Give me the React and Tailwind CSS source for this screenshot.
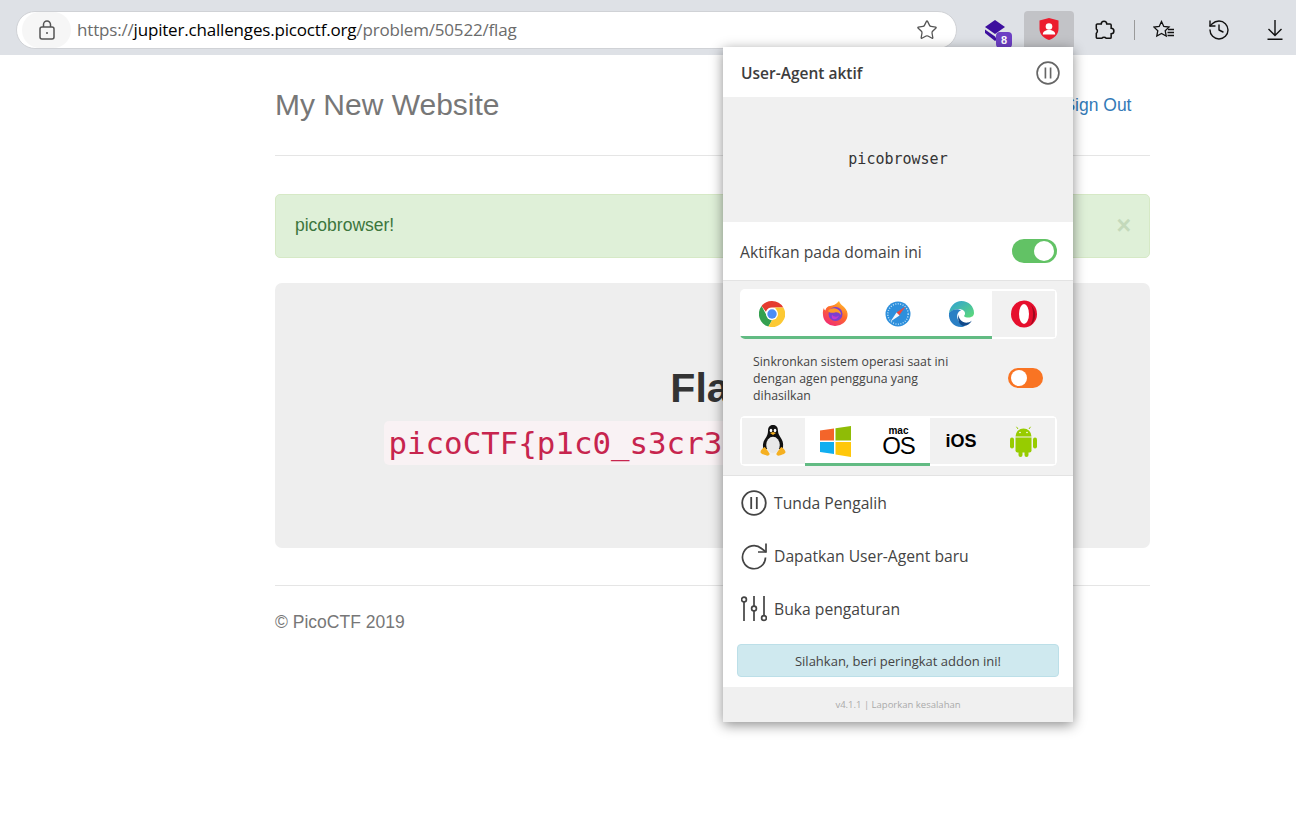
import React from 'react';
import { Star, History } from 'lucide-react';

const PauseIcon = ({ size, color }) => (
    <svg width={size} height={size} viewBox="0 0 26 26" fill="none" stroke={color} strokeWidth="1.8">
        <circle cx="13" cy="13" r="11.8" />
        <path d="M10.2 7v12M15.8 7v12" />
    </svg>
);

const ChromeIcon = () => (
    <svg width="26" height="26" viewBox="0 0 26 26">
        <path d="M13 0a13 13 0 0 1 11.3 6.5H13a6.5 6.5 0 0 0-6.1 4.3L2.6 5A13 13 0 0 1 13 0z" fill="#e53b30" />
        <path d="M2.6 5l5.6 10.5A6.5 6.5 0 0 0 13 19.5l-3.6 6A13 13 0 0 1 2.6 5z" fill="#34a04f" />
        <path d="M24.3 6.5A13 13 0 0 1 9.4 25.5l5.7-9.6a6 6 0 0 0 .6-9.4z" fill="#fcc934" />
        <circle cx="13" cy="13" r="6" fill="#fff" />
        <circle cx="13" cy="13" r="4.7" fill="#4b8cf5" />
    </svg>
);

const FirefoxIcon = () => (
    <svg width="26" height="26" viewBox="0 0 26 26">
        <defs>
            <linearGradient id="ffx" x1="0.8" y1="0" x2="0.2" y2="1">
                <stop offset="0" stopColor="#ffc02e" />
                <stop offset="0.45" stopColor="#ff6a2a" />
                <stop offset="1" stopColor="#f0267c" />
            </linearGradient>
        </defs>
        <path d="M17 0c1 3 3 4 5 6 3 3 4 6 3.500 9A12.300 11.500 0 0 1 1 14c-.5-3 .3-6 1-7 0 1 .5 2 1.300 2.500C4 6.500 6 5 8 5c3-.5 6-1.500 9-5z" fill="url(#ffx)" />
        <circle cx="13.500" cy="13" r="7" fill="#7b3fd0" />
        <path d="M6 10c2-2.500 6-3.500 9-2 2.500 1 4 3 4 6-2-2.500-4-3-6-2.500-2 .3-5.500.8-7-1.500z" fill="#ff9a2a" />
        <path d="M10 13.500c1.500 2.500 4.500 3 7 1-1 3-3.500 4.500-6 3.500-1.500-.7-1.500-3-1-4.500z" fill="#c13bd0" />
    </svg>
);

const SafariIcon = () => (
    <svg width="26" height="26" viewBox="0 0 26 26">
        <circle cx="13" cy="13" r="12.500" fill="#2d8fdc" />
        <circle cx="13" cy="13" r="10.200" fill="none" stroke="#bfe2f8" strokeWidth="1.400" strokeDasharray="1 1.500" />
        <path d="M20.500 5.500l-9 6L14 14.500z" fill="#f0483e" />
        <path d="M5.500 20.500l6-9L14.500 14.500z" fill="#f4f7fa" />
    </svg>
);

const EdgeIcon = () => (
    <svg width="26" height="26" viewBox="0 0 26 26">
        <defs>
            <linearGradient id="edg" x1="0" y1="0" x2="1" y2="1">
                <stop offset="0" stopColor="#2f9fd8" />
                <stop offset="1" stopColor="#5fdc75" />
            </linearGradient>
        </defs>
        <path d="M1 12C2 5 7 0 13.500 0 20.500 0 26 5.500 26 12c0 3-2.500 4.500-5.500 4.500-2 0-4-.5-4.500-1.500 1.500-1.500 1.500-4-.5-5.500C12 7 6 7.500 1 12z" fill="url(#edg)" />
        <path d="M1 12c3-4 9-5 12-2.500-3 1-4.500 4-3.500 8 .7 3 3.500 6 7.500 7.500-1 .5-2.500 1-4 1C6 26 0 20 1 12z" fill="#2a7fc4" />
        <path d="M10.500 13.500c0 5 4.500 9 9.500 8 1.500-.3 3-1 4-2-2 3-5 5.500-8 5.500-4 0-7-5-5.500-11.500z" fill="#114a8b" />
    </svg>
);

const OperaIcon = () => (
    <svg width="28" height="28" viewBox="0 0 28 28">
        <ellipse cx="14" cy="14" rx="13" ry="13.500" fill="#e60f2d" />
        <ellipse cx="14" cy="14" rx="5" ry="10" fill="#fff" />
        <path d="M19 3.500A13 13.500 0 0 1 19 26.500c2.500-2 4-6.500 4-12.500s-1.500-9-4-10.500z" fill="#9c0a20" />
    </svg>
);

const TuxIcon = () => (
    <svg width="26" height="32" viewBox="0 0 26 32">
        <path d="M13 0c3.500 0 5 2.500 5 6 0 3 1.500 4.500 3.500 8s2 7 1 10H3.500c-1-3-.8-6.500 1.500-10 2-3 3-5 3-8 0-3.500 1.500-6 5-6z" fill="#111" />
        <ellipse cx="13" cy="20" rx="6.800" ry="8.300" fill="#e8e8e8" />
        <ellipse cx="11" cy="5.500" rx="1.300" ry="1.800" fill="#fff" />
        <ellipse cx="15" cy="5.500" rx="1.300" ry="1.800" fill="#fff" />
        <path d="M10 8l3-1 3 1-3 2z" fill="#f5b021" />
        <path d="M.5 27c0-1.500 2.500-4 4-5 1 .5 4 4.500 5 6.500.5 1.500-1.500 2.500-3 2-2-.8-6-1.500-6-3.500zM25.500 27c0-1.500-2.500-4-4-5-1 .5-4 4.500-5 6.500-.5 1.500 1.500 2.500 3 2 2-.8 6-1.500 6-3.500z" fill="#f5b021" />
    </svg>
);

const WindowsIcon = () => (
    <svg width="31" height="31" viewBox="0 0 31 31">
        <path d="M0 4.500l14-2v12H0z" fill="#f4652a" />
        <path d="M15.500 2.300L31 0v14.500H15.500z" fill="#8fbc06" />
        <path d="M0 16h14v12L0 26z" fill="#11aef0" />
        <path d="M15.500 16H31v15l-15.500-2.500z" fill="#ffc70a" />
    </svg>
);

const AndroidIcon = () => (
    <svg width="27" height="31" viewBox="0 0 27 31" fill="#97cc00">
        <path d="M5.500 10.500a8 8 0 0 1 16 0z" />
        <path d="M8 3L6.500 .8M19 3l1.500-2.200" stroke="#97cc00" strokeWidth="1" />
        <path d="M5.500 11.500h16v13a2 2 0 0 1-2 2h-12a2 2 0 0 1-2-2z" />
        <rect x="0" y="11.500" width="4" height="11" rx="2" />
        <rect x="23" y="11.500" width="4" height="11" rx="2" />
        <rect x="8.500" y="24" width="4" height="7" rx="2" />
        <rect x="14.500" y="24" width="4" height="7" rx="2" />
        <circle cx="10" cy="6.500" r=".8" fill="#fff" />
        <circle cx="17" cy="6.500" r=".8" fill="#fff" />
    </svg>
);

const RefreshIcon = () => (
    <svg width="26" height="28" viewBox="0 0 26 28" fill="none" stroke="#444" strokeWidth="1.700">
        <path d="M24.500 15.500a11.500 11.500 0 1 1-4-9L25 10" />
        <path d="M25 1.500V10h-8" />
    </svg>
);

const SlidersIcon = () => (
    <svg width="26" height="26" viewBox="0 0 26 26" fill="none" stroke="#444" strokeWidth="1.700">
        <path d="M3 6v19M13 0v10M13 15v10M23 0v19" />
        <circle cx="3" cy="3.500" r="2.400" />
        <circle cx="13" cy="12.500" r="2.400" />
        <circle cx="23" cy="22" r="2.400" />
    </svg>
);

const MacLogo = () => (
    <div className="flex flex-col items-center text-black font-['Liberation_Sans',sans-serif]">
        <span className="text-[10px] font-bold h-[10px] leading-[10px]">mac</span>
        <span className="text-[24px] h-[20px] leading-[20px] tracking-[-1px]">OS</span>
    </div>
);

const TabCell = ({ active, edge, children }) => (
    <div className={`flex-1 min-w-0 h-full flex items-center justify-center ${active ? 'bg-white shadow-[inset_0_-3px_0_#62bb83]' : 'border-y-2 border-white'} ${edge || ''}`}>
        {children}
    </div>
);

const Toggle = ({ on, color, className, knob }) => (
    <div className={`rounded-full flex items-center px-[3px] ${on ? 'justify-end' : 'justify-start'} ${className}`} style={{ backgroundColor: color }}>
        <div className={`bg-white rounded-full ${knob}`} />
    </div>
);

const MenuRow = ({ icon, label }) => (
    <div className="h-[53px] flex items-center gap-[7px] pl-[18px] text-[15.700px] text-[#444]">
        <div className="w-[26px] h-[26px] flex items-center justify-center">{icon}</div>
        <span className="mt-[2px]">{label}</span>
    </div>
);

const Popup = () => (
    <div className="absolute left-[723px] top-[47px] w-[350px] bg-white shadow-[0_3px_12px_rgba(0,0,0,0.45)] font-['Open_Sans',sans-serif] text-[#444]">
        <div className="h-[50px] flex items-center justify-between pl-[18px] pr-[13px] pt-[2px]">
            <span className="text-[15.500px] font-semibold text-[#3d3d3d] mt-[2px]">User-Agent aktif</span>
            <PauseIcon size={24} color="#666" />
        </div>
        <div className="h-[125px] bg-[#f0f0f0] flex items-center justify-center font-['DejaVu_Sans_Mono',monospace] text-[15px] text-[#333]">
            picobrowser
        </div>
        <div className="h-[59px] flex items-center justify-between pl-[17px] pr-[16px] border-b border-[#e3e3e3]">
            <span className="text-[15.700px] mt-[4px]">Aktifkan pada domain ini</span>
            <Toggle on color="#62c265" className="w-[45px] h-[24px]" knob="w-[20px] h-[20px]" />
        </div>
        <div className="h-[195px] bg-[#f1f1f1] border-b border-[#e3e3e3] px-[17px] pt-[8px]">
            <div className="h-[50px] w-[317px] flex rounded-[5px] overflow-hidden">
                <TabCell active><ChromeIcon /></TabCell>
                <TabCell active><FirefoxIcon /></TabCell>
                <TabCell active><SafariIcon /></TabCell>
                <TabCell active><EdgeIcon /></TabCell>
                <TabCell edge="border-r-2"><OperaIcon /></TabCell>
            </div>
            <div className="h-[77px] flex items-center justify-between pl-[13px] pr-[13px]">
                <p className="w-[215px] text-[12.300px] leading-[17px] mt-[2px]">Sinkronkan sistem operasi saat ini dengan agen pengguna yang dihasilkan</p>
                <Toggle color="#f97423" className="w-[35px] h-[20px]" knob="w-[16px] h-[16px]" />
            </div>
            <div className="h-[50px] w-[317px] flex rounded-[5px] overflow-hidden">
                <TabCell edge="border-l-2"><TuxIcon /></TabCell>
                <TabCell active><WindowsIcon /></TabCell>
                <TabCell active><MacLogo /></TabCell>
                <TabCell><span className="text-black text-[18px] font-bold font-['Liberation_Sans',sans-serif]">iOS</span></TabCell>
                <TabCell edge="border-r-2"><AndroidIcon /></TabCell>
            </div>
        </div>
        <div>
            <MenuRow icon={<PauseIcon size={26} color="#444" />} label="Tunda Pengalih" />
            <MenuRow icon={<RefreshIcon />} label="Dapatkan User-Agent baru" />
            <MenuRow icon={<SlidersIcon />} label="Buka pengaturan" />
        </div>
        <div className="px-[14px] pt-[9px] pb-[10px]">
            <div className="h-[33px] bg-[#cfe9ef] border border-[#bcdfe8] rounded-[4px] flex items-center justify-center pt-[3px] text-[13px] text-[#444]">
                Silahkan, beri peringkat addon ini!
            </div>
        </div>
        <div className="h-[35px] bg-[#f0f0f0] flex items-center justify-center pt-[2px] text-[9.500px] text-[#aaa]">
            v4.1.1 | Laporkan kesalahan
        </div>
    </div>
);

const Toolbar = () => (
    <div className="h-[55px] bg-[#dee1e6] flex items-center pl-[16px]">
        <div className="w-[941px] shrink-0 h-[38px] mt-[4px] bg-white rounded-full border border-[#d0d2d6] flex items-center">
            <div className="w-[49px] h-[36px] rounded-full bg-[#f6f6f6] flex items-center justify-center ml-[5px]">
                <svg width="18" height="20" viewBox="0 0 18 20" fill="none" stroke="#555" strokeWidth="1.500">
                    <rect x="2" y="7" width="14" height="12" rx="2" />
                    <path d="M5.500 7V4.500a3.500 3.500 0 0 1 7 0V7" />
                    <circle cx="9" cy="13" r="1" fill="#555" stroke="none" />
                </svg>
            </div>
            <span className="ml-[6px] text-[17px] text-[#6b6b6b] font-['Open_Sans',sans-serif] tracking-[-0.18px]">
                https://<span className="text-black">jupiter.challenges.picoctf.org</span>/problem/50522/flag
            </span>
            <Star size={22} strokeWidth={1.400} color="#555" className="ml-auto mr-[18px]" />
        </div>
        <div className="relative ml-[27px] shrink-0 w-[28px] h-[28px] mt-[13px]">
            <svg width="22" height="22" viewBox="0 0 22 22">
                <path d="M11 0l10 7-10 7L1 7z" fill="#3d0f9e" />
                <path d="M1 9.500l10 7 2 3-2 1.500L1 13z" fill="#3d0f9e" />
            </svg>
            <div className="absolute left-[12px] top-[12px] w-[16px] h-[16px] rounded-[4px] bg-[#6d3fc4] text-white text-[11px] font-bold flex items-center justify-center">8</div>
        </div>
        <div className="ml-[12px] shrink-0 w-[50px] h-[36px] self-start mt-[11px] bg-[#c2c3c7] rounded-t-[4px] flex items-center justify-center">
            <svg width="20" height="22" viewBox="0 0 20 22">
                <path d="M10 0l9.500 2.500V11c0 5-4 9-9.500 11C4.500 20 .5 16 .5 11V2.500z" fill="#ec1c2e" />
                <circle cx="10" cy="8.500" r="3.300" fill="#fff" />
                <path d="M3.800 16.500c0-3 2.500-4.500 6.200-4.500s6.200 1.500 6.200 4.500z" fill="#fff" />
            </svg>
        </div>
        <div className="w-[60px] shrink-0 flex justify-center mt-[5px]">
            <svg width="22" height="22" viewBox="0 0 20 20" fill="none" stroke="#111" strokeWidth="1.400">
                <path d="M7.500 4.500a2.500 2.500 0 0 1 5 0h3a1 1 0 0 1 1 1v3a2.500 2.500 0 0 1 0 5v3a1 1 0 0 1-1 1h-3.500a2.500 2.500 0 0 0-4 0H4a1 1 0 0 1-1-1v-3.500a2.500 2.500 0 0 0 0-4V5.500a1 1 0 0 1 1-1z" />
            </svg>
        </div>
        <div className="w-[1px] shrink-0 h-[20px] mt-[5px] bg-[#9a9a9a]" />
        <div className="w-[58px] shrink-0 flex justify-center mt-[5px]">
            <svg width="22" height="20" viewBox="0 0 22 20" fill="none" stroke="#111" strokeWidth="1.300">
                <path d="M8.500 1.500l2.300 5 5.200.6-3.800 3.600 1 5.300-4.700-2.600-4.700 2.600 1-5.300L1 7.100l5.200-.6z" />
                <path d="M15 9.500h6M14.500 12.500h6.500M14.500 15.500h6.500" />
            </svg>
        </div>
        <div className="w-[52px] shrink-0 flex justify-center mt-[5px]">
            <History size={24} strokeWidth={1.400} color="#111" />
        </div>
        <div className="ml-[5px] w-[50px] shrink-0 flex justify-center mt-[5px]">
            <svg width="16" height="20" viewBox="0 0 16 20" fill="none" stroke="#111" strokeWidth="1.400">
                <path d="M8 0v15M1.500 9L8 15.500 14.500 9M.5 19.300h15" />
            </svg>
        </div>
    </div>
);

export default function App() {
    return (
        <div className="relative min-h-[819px] bg-white font-['Liberation_Sans',sans-serif] overflow-hidden">
            <Toolbar />
            <div className="w-[875px] ml-[275px] text-[#333]">
                <div className="h-[101px] border-b border-[#e5e5e5] flex items-center justify-between pb-[2px] pr-[18.500px]">
                    <h3 className="text-[30px] text-[#777]">My New Website</h3>
                    <a className="text-[17.500px] text-[#337ab7] mt-[2px]">Sign Out</a>
                </div>
                <div className="mt-[38px] h-[64px] bg-[#dff0d8] border border-[#d6e9c6] rounded-[5px] flex items-center justify-between pl-[19px] pr-[18px] pb-[2px] text-[17.500px] text-[#3c763d]">
                    <span>picobrowser!</span>
                    <span className="text-[25px] font-bold text-[#c4d9bb] leading-none">×</span>
                </div>
                <div className="mt-[25px] h-[265px] bg-[#eeeeee] rounded-[7px] flex flex-col items-center pt-[82px]">
                    <h1 className="text-[41px] font-bold leading-[46px] text-[#333]">Flag</h1>
                    <code className="mt-[10px] w-[658px] h-[44px] px-[5px] bg-[#f9f2f4] rounded-[5px] flex items-center font-['DejaVu_Sans_Mono',monospace] text-[30.800px] text-[#c7254e]">
                        picoCTF&#123;p1c0_s3cr3
                    </code>
                </div>
                <div className="mt-[37px] border-t border-[#e5e5e5] pt-[26px] text-[17.500px] text-[#777] leading-[20px]">
                    © PicoCTF 2019
                </div>
            </div>
            <Popup />
        </div>
    );
}
